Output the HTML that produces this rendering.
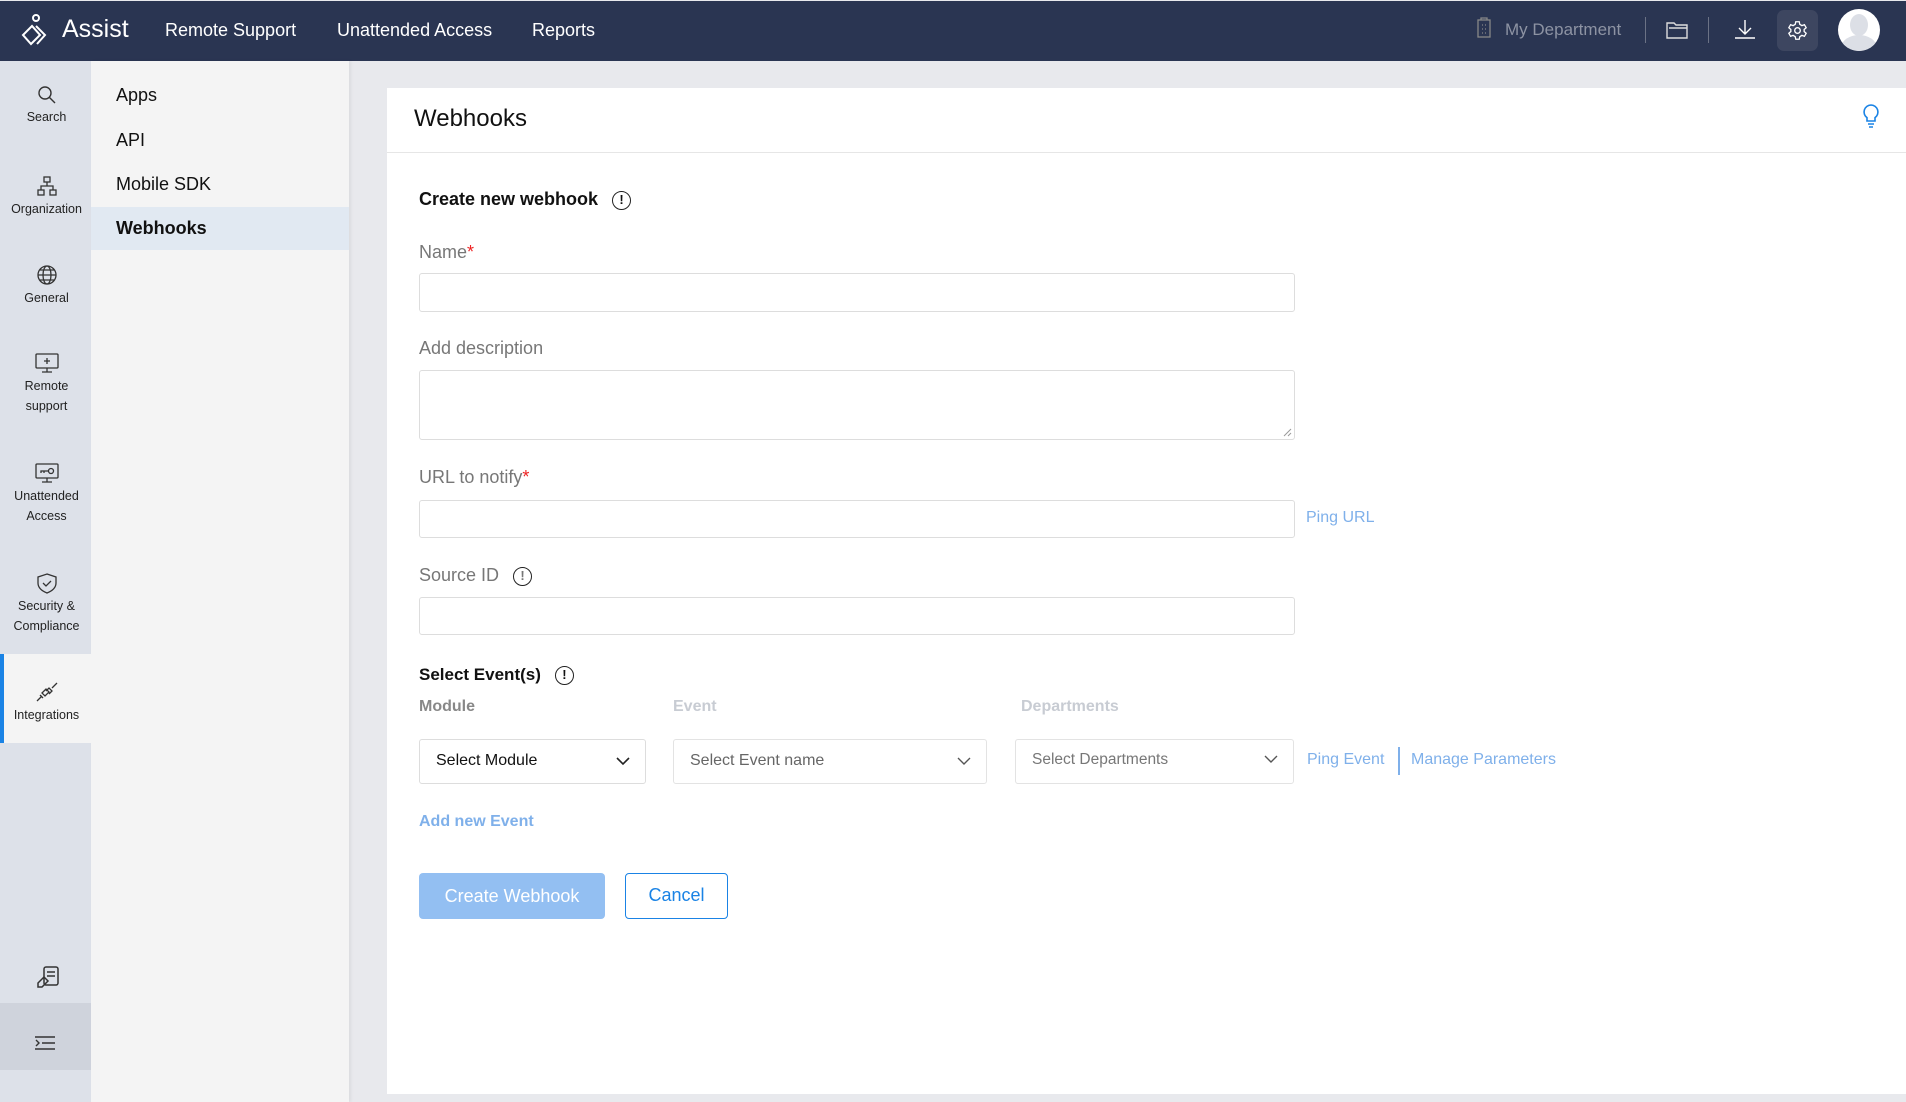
<!DOCTYPE html>
<html><head><meta charset="utf-8"><style>
*{box-sizing:border-box;margin:0;padding:0}
body{width:1906px;height:1102px;position:relative;overflow:hidden;background:#e8e9ed;font-family:"Liberation Sans",sans-serif;color:#111}
.a{position:absolute;white-space:nowrap}
#top{position:absolute;left:0;top:1px;width:1906px;height:60px;background:#2a3552}
.nav{color:#fff;font-size:18px;top:19px}
#rail{position:absolute;left:0;top:61px;width:91px;height:1041px;background:#dde1e9}
.ri{position:absolute;left:1px;width:91px;text-align:center;font-size:12.5px;color:#222;line-height:20px}
.ri svg{display:block;margin:0 auto 2px}
#sub{position:absolute;left:91px;top:61px;width:258px;height:1041px;background:#f4f4f4;box-shadow:2px 0 3px rgba(0,0,0,.06)}
.si{position:absolute;left:25px;font-size:18px;color:#111}
#card{position:absolute;left:387px;top:88px;width:1519px;height:1006px;background:#fff}
.lbl{font-size:18px;color:#777}
.in{position:absolute;left:32px;width:876px;border:1.5px solid #ddd;border-radius:3px;background:#fff}
.link{color:#7fb0ea;font-size:16px}
.info{display:inline-block;width:19px;height:19px;border:1.6px solid #222;border-radius:50%;text-align:center;font-size:13px;font-weight:bold;line-height:16px;vertical-align:middle;margin-left:14px}
.dd{position:absolute;top:651px;height:45px;border:1.5px solid #e3e3e3;border-radius:3px;font-size:16px;padding:0 16px;line-height:42px}
.dd svg{position:absolute;right:14px;top:16px}
</style></head><body>
<div id="top">
<svg class="a" style="left:20px;top:13px" width="32" height="34" viewBox="0 0 32 34" fill="none" stroke="#fff" stroke-width="2"><circle cx="16" cy="4" r="3"/><path d="M12 12 L3 21 L11 30 L20 21 Z"/><path d="M16 12 L25 21 L17 30"/></svg>
<div class="a" style="left:62px;top:14px;color:#fff;font-size:25px">Assist</div>
<div class="a nav" style="left:165px">Remote Support</div>
<div class="a nav" style="left:337px">Unattended Access</div>
<div class="a nav" style="left:532px">Reports</div>
<svg class="a" style="left:1476px;top:16px" width="16" height="22" viewBox="0 0 16 22" fill="none" stroke="#888" stroke-width="1.3"><rect x="2" y="3" width="12" height="17"/><path d="M5 3V1h6v2M6 8h1M9 8h1M6 12h1M9 12h1M6 16h1M9 16h1"/></svg>
<div class="a" style="left:1505px;top:19px;color:#8d93a3;font-size:17px">My Department</div>
<div class="a" style="left:1645px;top:16px;width:1px;height:26px;background:#6b7285"></div>
<svg class="a" style="left:1666px;top:20px" width="22" height="18" viewBox="0 0 22 18" fill="none" stroke="#ddd" stroke-width="1.4"><path d="M1 2h7l2 2h11v13H1z M3 7h18"/></svg>
<div class="a" style="left:1708px;top:16px;width:1px;height:26px;background:#6b7285"></div>
<svg class="a" style="left:1734px;top:17px" width="22" height="22" viewBox="0 0 22 22" fill="none" stroke="#fff" stroke-width="1.4"><path d="M11 2v14M5 10l6 6 6-6M1 20h20"/></svg>
<div class="a" style="left:1777px;top:9px;width:41px;height:41px;border-radius:7px;background:#3d4660"></div>
<svg class="a" style="left:1787px;top:19px" width="21" height="21" viewBox="0 0 24 24" fill="none" stroke="#fff" stroke-width="1.5"><circle cx="12" cy="12" r="3.2"/><path d="M10 2h4l.6 3 2.4 1.4 2.9-1 2 3.4-2.3 2v2.4l2.3 2-2 3.4-2.9-1L14.6 19 14 22h-4l-.6-3L7 17.6l-2.9 1-2-3.4 2.3-2v-2.4l-2.3-2 2-3.4 2.9 1L9.4 5z"/></svg>
<div class="a" style="left:1838px;top:8px;width:42px;height:42px;border-radius:50%;background:#fff;overflow:hidden"><div class="a" style="left:12px;top:5px;width:18px;height:22px;border-radius:50%;background:#dcdfe6"></div><div class="a" style="left:3px;top:26px;width:36px;height:26px;border-radius:50%;background:#dcdfe6"></div></div>
</div>

<div id="rail">
<div class="ri" style="top:24px"><svg width="20" height="20" viewBox="0 0 20 20" fill="none" stroke="#333" stroke-width="1.4"><circle cx="8" cy="8" r="6"/><path d="M12.5 12.5L18 18"/></svg>Search</div>
<div class="ri" style="top:114px"><svg width="22" height="22" viewBox="0 0 22 22" fill="none" stroke="#333" stroke-width="1.3"><rect x="8" y="2" width="6" height="5"/><rect x="2" y="15" width="6" height="5"/><rect x="14" y="15" width="6" height="5"/><path d="M11 7v4M5 15v-4h12v4"/></svg>Organization</div>
<div class="ri" style="top:203px"><svg width="22" height="22" viewBox="0 0 22 22" fill="none" stroke="#333" stroke-width="1.3"><circle cx="11" cy="11" r="9"/><ellipse cx="11" cy="11" rx="4" ry="9"/><path d="M2 11h18M4 6h14M4 16h14"/></svg>General</div>
<div class="ri" style="top:291px"><svg width="26" height="22" viewBox="0 0 26 22" fill="none" stroke="#333" stroke-width="1.3"><rect x="2" y="2" width="22" height="14" rx="1"/><path d="M13 6v6M10 9h6M13 16v4M8 20h10"/></svg>Remote<br>support</div>
<div class="ri" style="top:401px"><svg width="26" height="22" viewBox="0 0 26 22" fill="none" stroke="#333" stroke-width="1.3"><rect x="2" y="2" width="22" height="14" rx="1"/><circle cx="17" cy="9" r="2.5"/><path d="M14 9H7v2M10 9v2M13 16v4M8 20h10"/></svg>Unattended<br>Access</div>
<div class="ri" style="top:511px"><svg width="24" height="22" viewBox="0 0 24 22" fill="none" stroke="#333" stroke-width="1.3"><path d="M12 2l9 3v6c0 5-4 8-9 10-5-2-9-5-9-10V5z"/><path d="M8 11l3 3 5-5"/></svg>Security &amp;<br>Compliance</div>
<div class="a" style="left:0;top:593px;width:91px;height:89px;background:#f4f4f4"></div>
<div class="a" style="left:0;top:593px;width:4px;height:89px;background:#1a83e5"></div>
<div class="ri" style="top:620px"><svg width="24" height="22" viewBox="0 0 24 22" fill="none" stroke="#333" stroke-width="1.3"><path d="M2 20l5-5M22 2l-5 5M7 12l4-4 3 3-4 4zM11 10l3-3 3 3-3 3M5 14l3 3"/></svg>Integrations</div>
<svg class="a" style="left:36px;top:904px" width="24" height="26" viewBox="0 0 24 26" fill="none" stroke="#333" stroke-width="1.5"><rect x="8" y="2" width="14" height="18" rx="2"/><path d="M11 7h8M11 11h8M2 18l6-6 4 4-6 6-4 0z"/></svg>
<div class="a" style="left:0;top:942px;width:91px;height:67px;background:#cfd3dc"></div>
<svg class="a" style="left:34px;top:974px" width="22" height="16" viewBox="0 0 22 16" fill="none" stroke="#333" stroke-width="1.4"><path d="M1 2h20M8 8h13M1 14h20M2 5l3 3-3 3"/></svg>
</div>

<div id="sub">
<div class="si" style="top:24px">Apps</div>
<div class="si" style="top:69px">API</div>
<div class="si" style="top:113px">Mobile SDK</div>
<div class="a" style="left:0;top:146px;width:258px;height:43px;background:#e1e9f2"></div>
<div class="si" style="top:157px;font-weight:bold">Webhooks</div>
</div>

<div id="card">
<div class="a" style="left:27px;top:17px;font-size:24px;color:#111">Webhooks</div>
<svg class="a" style="left:1474px;top:15px" width="20" height="26" viewBox="0 0 20 26" fill="none" stroke="#1a83e5" stroke-width="1.6"><path d="M10 2a7 7 0 0 0-4 12.7V18h8v-3.3A7 7 0 0 0 10 2z"/><path d="M7 21h6M8 24h4"/></svg>
<div class="a" style="left:0;top:64px;width:1519px;height:1px;background:#e6e6e6"></div>

<div class="a" style="left:32px;top:101px;font-size:18px;font-weight:bold">Create new webhook<span class="info">!</span></div>
<div class="a lbl" style="left:32px;top:154px">Name<span style="color:#e22">*</span></div>
<div class="in" style="top:185px;height:39px"></div>
<div class="a lbl" style="left:32px;top:250px">Add description</div>
<div class="in" style="top:282px;height:70px"><svg class="a" style="right:2px;bottom:2px" width="9" height="9" viewBox="0 0 9 9" stroke="#999"><path d="M1 8L8 1M5 8L8 5"/></svg></div>
<div class="a lbl" style="left:32px;top:379px">URL to notify<span style="color:#e22">*</span></div>
<div class="in" style="top:412px;height:38px"></div>
<div class="a link" style="left:919px;top:421px">Ping URL</div>
<div class="a lbl" style="left:32px;top:477px">Source ID<span class="info">!</span></div>
<div class="in" style="top:509px;height:38px"></div>

<div class="a" style="left:32px;top:577px;font-size:17px;font-weight:bold">Select Event(s)<span class="info">!</span></div>
<div class="a" style="left:32px;top:610px;font-size:16px;font-weight:bold;color:#888">Module</div>
<div class="a" style="left:286px;top:610px;font-size:16px;font-weight:bold;color:#c8ccd3">Event</div>
<div class="a" style="left:634px;top:610px;font-size:16px;font-weight:bold;color:#c8ccd3">Departments</div>
<div class="dd" style="left:32px;width:227px;border-color:#ddd;color:#111">Select Module<svg width="16" height="10" viewBox="0 0 16 10" fill="none" stroke="#222" stroke-width="1.6"><path d="M2 2l6 6 6-6"/></svg></div>
<div class="dd" style="left:286px;width:314px;color:#666">Select Event name<svg width="16" height="10" viewBox="0 0 16 10" fill="none" stroke="#555" stroke-width="1.4"><path d="M2 2l6 6 6-6"/></svg></div>
<div class="dd" style="left:628px;width:279px;color:#777;font-size:15.5px;line-height:40px">Select Departments<svg width="16" height="10" viewBox="0 0 16 10" fill="none" stroke="#555" stroke-width="1.4" style="top:14px"><path d="M2 2l6 6 6-6"/></svg></div>
<div class="a link" style="left:920px;top:663px">Ping Event</div>
<div class="a" style="left:1011px;top:659px;width:1.5px;height:28px;background:#7fb0ea"></div>
<div class="a link" style="left:1024px;top:663px">Manage Parameters</div>
<div class="a" style="left:32px;top:725px;font-size:16px;font-weight:bold;color:#7fb0ea">Add new Event</div>

<div class="a" style="left:32px;top:785px;width:186px;height:46px;border-radius:4px;background:#93bff2;color:#fff;font-size:18px;text-align:center;line-height:46px">Create Webhook</div>
<div class="a" style="left:238px;top:785px;width:103px;height:46px;border-radius:4px;border:1.5px solid #1a83e5;color:#1a83e5;font-size:18px;text-align:center;line-height:43px">Cancel</div>
</div>
</body></html>
